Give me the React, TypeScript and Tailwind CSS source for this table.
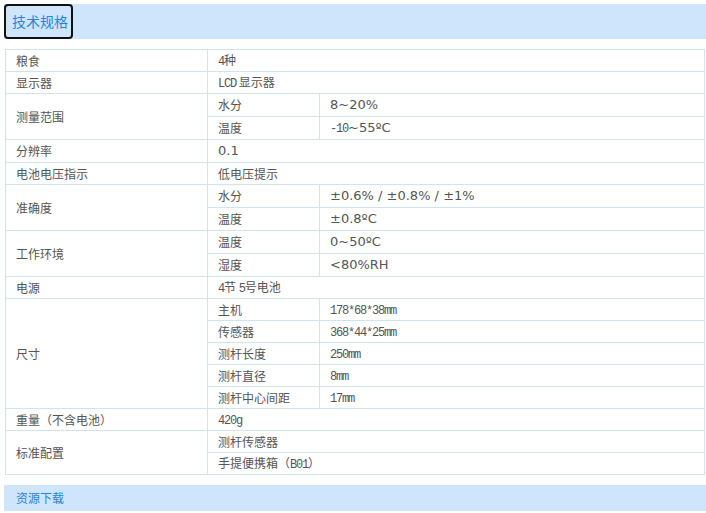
const cjk = "font-['Noto_Sans_CJK_SC',sans-serif]";

// narrow ascii like the old SimSun half-width glyphs
function M({ children }: { children: React.ReactNode }) {
  return <span className="font-['Liberation_Mono',monospace] text-[12px] tracking-[-1.2px]">{children}</span>;
}

// Verdana-ish numerals
function V({ children }: { children: React.ReactNode }) {
  return <span className="font-['DejaVu_Sans',sans-serif] text-[13px]">{children}</span>;
}

type Cell = { text: React.ReactNode; span?: string };

const rows: { label: string; rows: number; cells: Cell[][] }[] = [
  { label: "粮食", rows: 1, cells: [[{ text: <><M>4</M>种</>, span: "col-span-2" }]] },
  { label: "显示器", rows: 1, cells: [[{ text: <><M>LCD</M> 显示器</>, span: "col-span-2" }]] },
  {
    label: "测量范围",
    rows: 2,
    cells: [
      [{ text: "水分" }, { text: <V>8~20%</V> }],
      [{ text: "温度" }, { text: <><M>-10</M><V>~55ºC</V></> }],
    ],
  },
  { label: "分辨率", rows: 1, cells: [[{ text: <V>0.1</V>, span: "col-span-2" }]] },
  { label: "电池电压指示", rows: 1, cells: [[{ text: "低电压提示", span: "col-span-2" }]] },
  {
    label: "准确度",
    rows: 2,
    cells: [
      [{ text: "水分" }, { text: <V>±0.6% / ±0.8% / ±1%</V> }],
      [{ text: "温度" }, { text: <V>±0.8ºC</V> }],
    ],
  },
  {
    label: "工作环境",
    rows: 2,
    cells: [
      [{ text: "温度" }, { text: <V>0~50ºC</V> }],
      [{ text: "湿度" }, { text: <V>&lt;80%RH</V> }],
    ],
  },
  { label: "电源", rows: 1, cells: [[{ text: <><M>4</M>节 <M>5</M>号电池</>, span: "col-span-2" }]] },
  {
    label: "尺寸",
    rows: 5,
    cells: [
      [{ text: "主机" }, { text: <M>178*68*38mm</M> }],
      [{ text: "传感器" }, { text: <M>368*44*25mm</M> }],
      [{ text: "测杆长度" }, { text: <M>250mm</M> }],
      [{ text: "测杆直径" }, { text: <M>8mm</M> }],
      [{ text: "测杆中心间距" }, { text: <M>17mm</M> }],
    ],
  },
  { label: "重量（不含电池）", rows: 1, cells: [[{ text: <M>420g</M>, span: "col-span-2" }]] },
  {
    label: "标准配置",
    rows: 2,
    cells: [
      [{ text: "测杆传感器", span: "col-span-2" }],
      [{ text: <>手提便携箱（<M>B01</M>）</>, span: "col-span-2" }],
    ],
  },
];

const rowSpan: Record<number, string> = { 1: "", 2: "row-span-2", 5: "row-span-5" };

export default function App() {
  return (
    <div className="min-h-[513px] bg-white pt-[4px] pl-[4px]">
      {/* Section header */}
      <div className="flex h-[35px] w-[702px] bg-[#cfe5fc]">
        <button className={`h-[35px] w-[69px] rounded-[4px] border-2 border-[#111] pl-[6px] text-left text-[14px] text-[#2b84d6] ${cjk}`}>
          技术规格
        </button>
      </div>

      {/* Spec table */}
      <div
        className={`mt-[10px] ml-px grid w-[700px] grid-cols-[201px_111px_1fr] grid-rows-[21px_21px_22px_22px_22px_21px_22px_22px_22px_22px_21px_21px_21px_21px_21px_21px_21px_21px_21px] gap-px bg-[#cfe3f6] p-px text-[12px] text-[#555] ${cjk}`}
      >
        {rows.map((r) => (
          <>
            <div key={r.label} className={`flex items-center bg-white px-[10px] ${rowSpan[r.rows]}`}>
              <span>{r.label}</span>
            </div>
            {r.cells.flat().map((c, i) => (
              <div key={r.label + i} className={`flex items-center whitespace-pre bg-white px-[10px] ${c.span ?? ""}`}>
                <span>{c.text}</span>
              </div>
            ))}
          </>
        ))}
      </div>

      {/* Downloads header */}
      <div className={`mt-[10px] flex h-[26px] w-[702px] items-center bg-[#cfe5fc] pl-[12px] text-[12px] text-[#2b84d6] ${cjk}`}>
        资源下载
      </div>
    </div>
  );
}
